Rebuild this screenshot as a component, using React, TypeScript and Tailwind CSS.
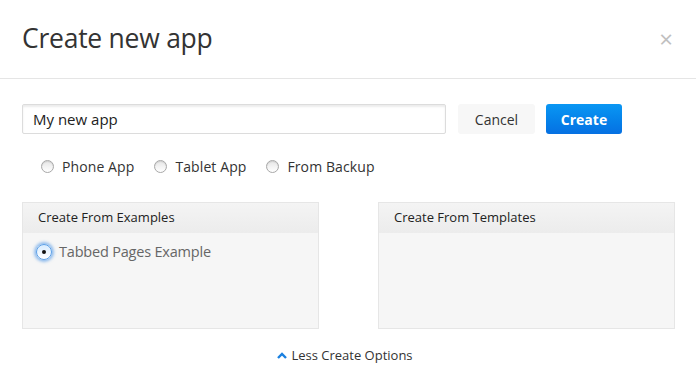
import React from "react";

function Radio({ label, checked = false }: { label: string; checked?: boolean }) {
  return (
    <label className="flex items-center gap-[8px]">
      <span className="w-[13px] h-[13px] rounded-full border border-[#a8a8a8] bg-gradient-to-b from-[#e6e6e6] to-[#ffffff] shadow-[inset_0_1px_1px_rgba(0,0,0,0.1)]" />
      <span className="text-[14px] text-[#333] tracking-[0.1px]">{label}</span>
    </label>
  );
}

function Panel({ title, children }: { title: string; children?: React.ReactNode }) {
  return (
    <div className="w-[297px] h-[127px] border border-[#e6e6e6] bg-[#f6f6f6] flex flex-col">
      <div className="h-[30px] bg-gradient-to-b from-[#f4f4f4] to-[#ececec] flex items-center pl-[15px] text-[13px] text-[#222]">
        {title}
      </div>
      <div className="flex-1">{children}</div>
    </div>
  );
}

export default function App() {
  return (
    <div
      className="w-[696px] h-[379px] bg-white overflow-hidden"
      style={{ fontFamily: '"Open Sans", "Noto Sans", sans-serif' }}
    >
      <div className="h-[79px] border-b border-[#e5e5e5] flex items-center justify-between pl-[22px] pr-[23px]">
        <h1 className="text-[26.5px] text-[#333] tracking-[-0.25px] leading-none mt-[-2px]">Create new app</h1>
        <span className="text-[24px] text-[#c0c0c0] leading-none">×</span>
      </div>
      <div className="px-[22px] pt-[25px]">
        <div className="flex items-center">
          <div className="w-[424px] h-[30px] border border-[#dcdcdc] rounded-[2px] shadow-[inset_0_2px_2px_rgba(0,0,0,0.08)] flex items-center pl-[10px] text-[15px] text-[#222]">
            My new app
          </div>
          <button className="ml-[12px] w-[77px] h-[30px] rounded-[3px] bg-[#f7f7f7] text-[14px] text-[#333]">
            Cancel
          </button>
          <button className="ml-[11px] w-[76px] h-[30px] rounded-[3px] bg-gradient-to-b from-[#0b97f3] to-[#0670e2] text-[14px] font-bold text-white">
            Create
          </button>
        </div>
        <div className="flex items-center gap-[20px] pl-[19px] mt-[22px]">
          <Radio label="Phone App" />
          <Radio label="Tablet App" />
          <Radio label="From Backup" />
        </div>
        <div className="flex justify-between mt-[25px] w-[653px]">
          <Panel title="Create From Examples">
            <div className="flex items-center gap-[7px] pl-[13px] pt-[8px]">
              <span className="w-[16px] h-[16px] rounded-full bg-gradient-to-b from-[#d8ecff] to-[#ffffff] border border-[#5a9fe8] shadow-[0_0_3px_2px_rgba(60,140,230,0.55)] flex items-center justify-center">
                <span className="w-[4px] h-[4px] rounded-full bg-[#111]" />
              </span>
              <span className="text-[14.5px] text-[#666] tracking-[-0.2px]">Tabbed Pages Example</span>
            </div>
          </Panel>
          <Panel title="Create From Templates" />
        </div>
        <div className="flex items-center justify-center gap-[4px] mt-[17px] pr-[6px] text-[13px] text-[#333]">
          <svg width="10" height="7" viewBox="0 0 10 7">
            <path d="M1 6 L5 2 L9 6" stroke="#1a80e0" strokeWidth="2.4" fill="none" />
          </svg>
          <span>Less Create Options</span>
        </div>
      </div>
    </div>
  );
}
